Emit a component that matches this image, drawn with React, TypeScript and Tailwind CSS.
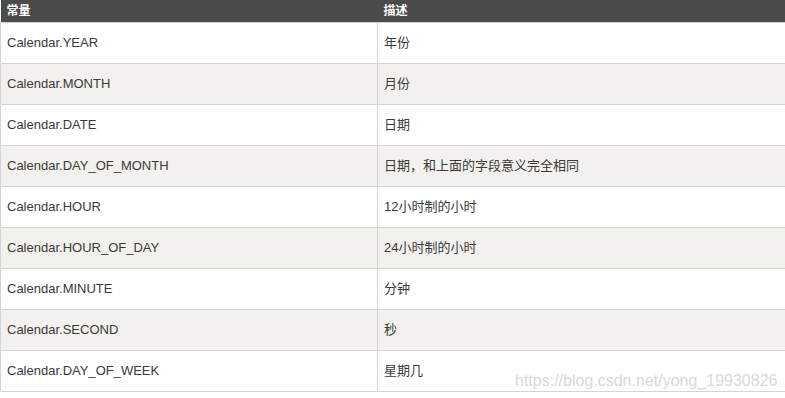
import React from "react";

const rows: [string, string][] = [
  ["Calendar.YEAR", "年份"],
  ["Calendar.MONTH", "月份"],
  ["Calendar.DATE", "日期"],
  ["Calendar.DAY_OF_MONTH", "日期，和上面的字段意义完全相同"],
  ["Calendar.HOUR", "12小时制的小时"],
  ["Calendar.HOUR_OF_DAY", "24小时制的小时"],
  ["Calendar.MINUTE", "分钟"],
  ["Calendar.SECOND", "秒"],
  ["Calendar.DAY_OF_WEEK", "星期几"],
];

export default function App() {
  return (
    <div
      className="relative w-[785px] h-[398px] bg-white overflow-hidden"
      style={{ fontFamily: '"Liberation Sans", Arial, "Noto Sans CJK SC", sans-serif' }}
    >
      <table className="w-[790px] border-collapse table-fixed text-[13px] text-[#3a3a3a]">
        <colgroup>
          <col className="w-[377px]" />
          <col />
        </colgroup>
        <thead>
          <tr className="bg-[#4b4b4b] text-white h-[22px]">
            <th className="text-left font-semibold px-[6px] py-0 text-[12px]">常量</th>
            <th className="text-left font-semibold px-[6px] py-0 text-[12px]">描述</th>
          </tr>
        </thead>
        <tbody>
          {rows.map(([name, desc], i) => (
            <tr key={name} className={i % 2 === 1 ? "bg-[#f3f1ed]" : "bg-white"}>
              <td className="h-[41px] px-[6px] py-0 border border-[#d4d4d4]">{name}</td>
              <td className="h-[41px] px-[6px] py-0 border border-[#d4d4d4]">{desc}</td>
            </tr>
          ))}
        </tbody>
      </table>
      <div className="absolute left-[515px] top-[369px] text-[16px] text-[#d9d9d9]">
        https://blog.csdn.net/yong_19930826
      </div>
    </div>
  );
}
